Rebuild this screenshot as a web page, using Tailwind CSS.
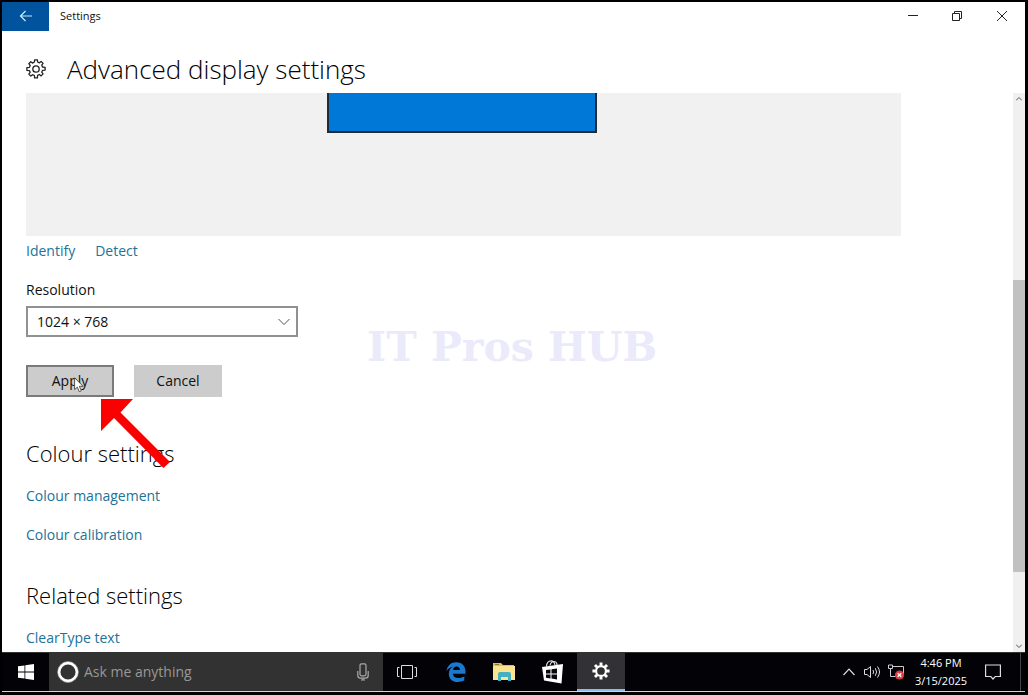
<!DOCTYPE html>
<html lang="en">
<head>
    <meta charset="UTF-8">
    <meta name="viewport" content="width=device-width, initial-scale=1.0">
    <title>Settings</title>
    <script src="https://cdn.jsdelivr.net/npm/@tailwindcss/browser@4"></script>
</head>
<body class="flex h-screen flex-col overflow-hidden bg-black pt-0.5 pr-[3px] pb-[3px] pl-0.5 font-['Open_Sans','Noto_Sans',sans-serif] text-sm text-[#111]">

    <!-- Settings window -->
    <div class="flex min-h-0 flex-1 flex-col bg-white">
        <!-- Title bar -->
        <header class="flex h-[29px] shrink-0 items-center pb-px">
            <button class="flex h-[29px] w-[47px] items-center justify-center bg-[#00539c]" aria-label="Back">
                <svg class="h-3 w-3.5" viewBox="0 0 14 12" fill="none" stroke="#c8f0f8" stroke-width="1.2"><path d="M13 6H1.5M6.5 1 1.5 6l5 5"/></svg>
            </button>
            <span class="ml-[11px] text-[11px]">Settings</span>
            <div class="ml-auto flex h-full">
                <button class="flex w-11 items-center justify-center" aria-label="Minimize">
                    <svg class="h-2.5 w-2.5" viewBox="0 0 10 10" stroke="#222"><path d="M0 4.5h10"/></svg>
                </button>
                <button class="flex w-11 items-center justify-center" aria-label="Restore">
                    <svg class="h-2.5 w-2.5" viewBox="0 0 10 10" fill="none" stroke="#222"><path d="M.5 2.5h7v7h-7zM2.5 2.5v-2h7v7h-2"/></svg>
                </button>
                <button class="flex w-[46px] items-center justify-center" aria-label="Close">
                    <svg class="h-2.5 w-2.5" viewBox="0 0 10 10" fill="none" stroke="#222"><path d="m0 0 10 10M10 0 0 10"/></svg>
                </button>
            </div>
        </header>

        <!-- Page heading -->
        <div class="flex h-[62px] shrink-0 items-center pt-3.5 pl-6">
            <svg class="h-5 w-5" viewBox="0 0 20 20" fill="none" stroke="#222" stroke-width="1.3" stroke-linejoin="round">
                <path d="M8.4 3 8.6.9h2.8L11.6 3l1.8.8 1.7-1.4 2 2-1.4 1.7.8 1.9 2.6.3v2.8l-2.6.3-.8 1.8 1.4 1.7-2 2-1.7-1.4-1.8.8-.2 2.6H8.6L8.4 16.5l-1.9-.8-1.7 1.4-2-2 1.4-1.7-.8-1.8L.9 11.4V8.6L3.4 8.3l.8-1.9-1.4-1.7 2-2 1.7 1.4z"/>
                <circle cx="10" cy="10" r="3.2"/>
            </svg>
            <h1 class="ml-[21px] text-[26px] leading-8 font-light text-black">Advanced display settings</h1>
        </div>

        <div class="flex min-h-0 flex-1">
            <main class="relative min-w-0 flex-1 overflow-hidden pl-6">
                <!-- Monitor preview -->
                <div class="mr-[112px] h-[143px] bg-[#f1f1f1] pr-1">
                    <div class="mx-auto h-10 w-[270px] border-2 border-t-0 border-[#222b35] bg-[#0078d7]"></div>
                </div>
                <div class="mt-[3px] flex gap-5 leading-6 text-[#207399]">
                    <a href="#">Identify</a>
                    <a href="#">Detect</a>
                </div>

                <label for="resolution" class="mt-[15px] block leading-6">Resolution</label>
                <div class="relative mt-1 h-[31px] w-[272px]">
                    <select id="resolution" class="h-full w-full appearance-none border-2 border-[#919191] bg-white pl-[9px]">
                        <option>1024 × 768</option>
                    </select>
                    <svg class="pointer-events-none absolute top-3 right-2 h-2 w-3" viewBox="0 0 12 8" fill="none" stroke="#555"><path d="M.5 1 6 6.5 11.5 1"/></svg>
                </div>

                <div class="relative mt-7 flex gap-5">
                    <button class="h-8 w-[88px] border-2 border-[#7a7a7a] bg-[#ccc]">Apply</button>
                    <button class="h-8 w-[88px] bg-[#ccc]">Cancel</button>
                    <!-- Mouse cursor -->
                    <svg class="absolute top-3 left-12 h-4 w-2.5" viewBox="0 0 10 16" fill="#fff" stroke="#333" stroke-width=".8"><path d="M.6.8v11.8l2.7-2.5 2 4.6 2-.9-2-4.5h3.8z"/></svg>
                    <!-- Red pointer arrow -->
                    <svg class="absolute top-[34px] left-[75px] z-10 h-[70px] w-[70px]" viewBox="0 0 70 70" fill="#fb0000"><path d="M0 0h32L19.5 13.5 69 63l-6.5 6L13 19 0 32z"/></svg>
                </div>

                <h2 class="mt-10 text-[22px] leading-8 font-light text-black">Colour settings</h2>
                <a href="#" class="mt-[15px] block leading-6 text-[#207399]">Colour management</a>
                <a href="#" class="mt-[15px] block leading-6 text-[#207399]">Colour calibration</a>
                <h2 class="mt-8 text-[22px] leading-8 font-light text-black">Related settings</h2>
                <a href="#" class="mt-[15px] block leading-6 text-[#207399]">ClearType text</a>

                <!-- Watermark -->
                <div class="pointer-events-none absolute top-[230px] left-[365px] font-['DejaVu_Serif',serif] text-[41px] leading-12 font-bold whitespace-nowrap text-[#eaeafb]">IT Pros HUB</div>
            </main>

            <!-- Scrollbar -->
            <div class="flex w-3 shrink-0 flex-col items-center bg-[#f0f0f0]">
                <svg class="mt-1 h-1 w-1.5" viewBox="0 0 6 4" fill="none" stroke="#555"><path d="m0 3.5 3-3 3 3"/></svg>
                <div class="mt-[179px] h-[292px] w-full bg-[#c1c1c1]"></div>
                <svg class="mt-auto mb-1 h-1 w-1.5" viewBox="0 0 6 4" fill="none" stroke="#555"><path d="m0 .5 3 3 3-3"/></svg>
            </div>
        </div>
    </div>

    <!-- Taskbar -->
    <footer class="flex h-10 shrink-0 border-t border-b border-t-[#333] border-b-[#d5d5d5] bg-[#020207] text-white">
        <button class="flex w-[47px] items-center justify-center" aria-label="Start">
            <svg class="h-4 w-4" viewBox="0 0 16 16" fill="#fff"><path d="M0 2.3 6.5 1.4v6.2H0zM7.3 1.3 16 0v7.6H7.3zM0 8.4h6.5v6.2L0 13.7zM7.3 8.4H16V16l-8.7-1.3z"/></svg>
        </button>
        <div class="flex w-[334px] items-center bg-[#323232] pl-2">
            <svg class="h-[22px] w-[22px]" viewBox="0 0 22 22" fill="none"><circle cx="11" cy="11" r="9" stroke="#fff" stroke-width="2.8"/><circle cx="11" cy="11" r="10.5" stroke="#999" stroke-width=".6"/></svg>
            <input type="text" aria-label="Search" placeholder="Ask me anything" class="ml-[5px] min-w-0 flex-1 placeholder:text-[#989898]">
            <button class="mr-3.5" aria-label="Voice search">
                <svg class="h-[18px] w-3" viewBox="0 0 12 18" fill="none" stroke="#aaa" stroke-width="1.2"><rect x="3" y=".8" width="6" height="12" rx="1.5"/><path d="M.8 8v4.5q0 2.7 2.7 2.7h5q2.7 0 2.7-2.7V8M6 15v2M4 17h4"/></svg>
            </button>
        </div>
        <button class="flex w-12 items-center justify-center" aria-label="Task view">
            <svg class="h-3.5 w-5" viewBox="0 0 20 14" fill="none" stroke="#ddd"><path d="M4.5.5h11v13h-11zM2.5 2.5h-2v9h2M17.5 2.5h2v9h-2"/></svg>
        </button>
        <button class="flex w-[49px] items-center justify-center" aria-label="Edge">
            <svg class="h-5 w-5" viewBox="0 0 20 20" fill="#1b78cf"><path d="M.5 9.2C1.2 3.6 4.8.2 10.3.2c6 0 9.2 4.2 9.2 9.3v2.2H7c.2 3 2.6 4.3 5.8 4.3 2 0 3.9-.6 5.5-1.5v4.1c-1.8.9-4.1 1.4-6.5 1.4-5.6 0-9-3.3-9-8.1 0-3.2 1.6-5.8 4.6-7.3C4 5.2 1.8 6.8.5 9.2zM7 8h6.9c0-2.3-1.2-3.6-3.3-3.6S7.3 5.8 7 8z"/></svg>
        </button>
        <button class="flex w-12 items-center justify-center" aria-label="File Explorer">
            <svg class="h-5 w-[22px]" viewBox="0 0 22 20"><path fill="#e3bd55" d="M0 1h8l2 2h11v4H0z"/><path fill="#fbe394" d="M0 4h22v14H0z"/><path fill="#8a7436" d="M2 2h4v1H2z"/><path fill="#45b0bf" d="M5 19v-7q0-2 2-2h9q2 0 2 2v7h-3v-4H8v4z"/></svg>
        </button>
        <button class="flex w-[49px] items-center justify-center" aria-label="Store">
            <svg class="h-6 w-[22px]" viewBox="0 0 22 24"><path d="M4.5 6.5C4.5 2.5 7 .8 9 .8s3.5 1.5 4 4.2M8 5.5C8.500 2.5 10.5 1.5 12 1.5S15 3 15 5" fill="none" stroke="#ddd" stroke-width="1.2"/><path fill="#fff" d="m0 7 21-3-1.5 19.500L2 20.500z"/><path fill="#08080d" d="m4 10 4.500-.6v4H4zm5.500-.7 5.500-.8v4.900H9.500zM4 14.400h4.500v4L4 17.800zm5.500 0H15v5l-5.500-.8z"/></svg>
        </button>
        <button class="flex w-12 items-center justify-center border-b-2 border-[#8fbce6] bg-[#323236]" aria-label="Settings">
            <svg class="h-[18px] w-[18px]" viewBox="0 0 20 20" fill="none" stroke="#fff"><circle cx="10" cy="10" r="5.5" stroke-width="2.4"/><path stroke-width="3.2" d="M10 4V.5M10 16v3.500M4 10H.5M16 10h3.500M5.800 5.800 3.300 3.300M14.200 5.800l2.500-2.500M5.800 14.200l-2.500 2.500M14.200 14.200l2.500 2.500"/></svg>
        </button>

        <!-- Tray -->
        <div class="ml-auto flex items-center">
            <button aria-label="Show hidden icons">
                <svg class="h-2 w-3" viewBox="0 0 12 8" fill="none" stroke="#ddd" stroke-width="1.2"><path d="M.5 7 6 1.2 11.5 7"/></svg>
            </button>
            <button class="ml-[9px]" aria-label="Volume">
                <svg class="h-3.5 w-[17px]" viewBox="0 0 17 14" fill="none" stroke="#ddd"><path d="M.5 4.5H3l3.5-3v11L3 9.500H.5zM9 5q1.200 2 0 4M11.300 3.200q2.600 3.800 0 7.600M13.500 1.500q4 5.500 0 11"/></svg>
            </button>
            <button class="ml-[7px]" aria-label="Network">
                <svg class="h-4 w-[17px]" viewBox="0 0 17 16" fill="none" stroke="#ccc"><path d="M5 2.5h10.5v8M2.5 5v7.5H9M.5 1h4v3.5h-4z"/><circle cx="11.5" cy="11" r="4.6" fill="#d83b41" stroke="none"/><path stroke="#fff" stroke-width="1.3" d="m9.700 9.200 3.600 3.600m0-3.600-3.600 3.600"/></svg>
            </button>
            <div class="ml-2 w-[56px] text-center text-[11px] leading-[18px] whitespace-nowrap">
                <p>4:46 PM</p>
                <p>3/15/2025</p>
            </div>
            <button class="mr-[19px] ml-4" aria-label="Notifications">
                <svg class="h-4 w-4" viewBox="0 0 16 16" fill="none" stroke="#ddd" stroke-width="1.2"><path d="M.6 1h14.8v11.5h-5.2L8 15l-2.200-2.500H.6z"/></svg>
            </button>
            <div class="mr-1 h-full w-px bg-[#444]"></div>
        </div>
    </footer>
</body>
</html>
